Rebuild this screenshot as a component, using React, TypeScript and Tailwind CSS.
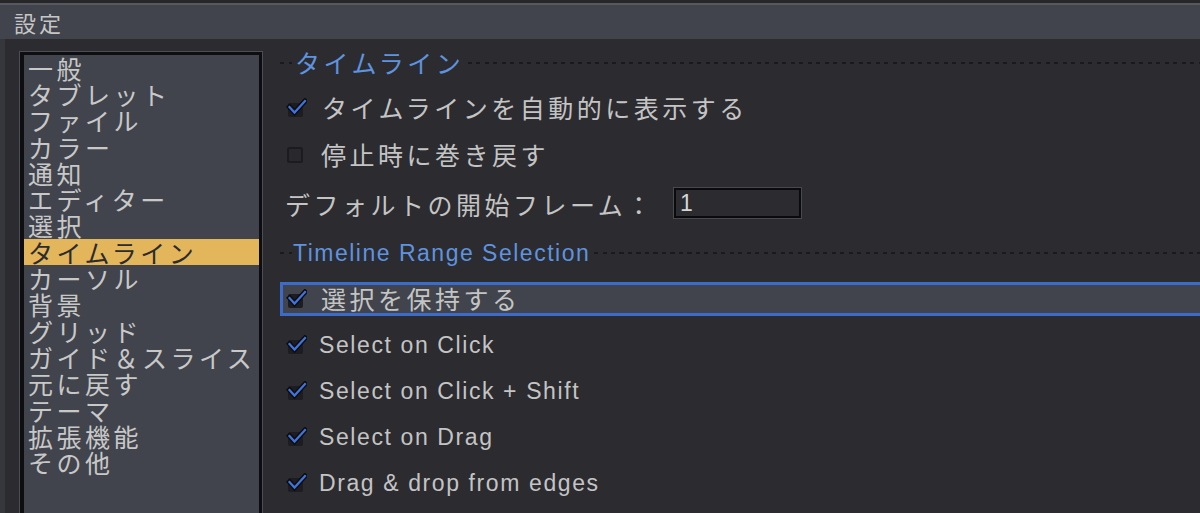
import React from "react";

const jp = "font-['Noto_Sans_CJK_JP','Noto_Sans',sans-serif]";
const px = "font-['Liberation_Sans',Arial,sans-serif]";
const dashes =
  "h-[2px] bg-[repeating-linear-gradient(90deg,#1a1a1e_0px,#1a1a1e_4px,transparent_4px,transparent_8.5px)]";

const sections = [
  "一般",
  "タブレット",
  "ファイル",
  "カラー",
  "通知",
  "エディター",
  "選択",
  "タイムライン",
  "カーソル",
  "背景",
  "グリッド",
  "ガイド＆スライス",
  "元に戻す",
  "テーマ",
  "拡張機能",
  "その他",
];

function CheckBox({ checked }: { checked: boolean }) {
  if (!checked) {
    return (
      <svg width="20" height="20" viewBox="0 0 20 20" className="shrink-0">
        <rect x="2" y="3" width="14" height="14" rx="1.5" fill="#29292d" stroke="#1c1c20" strokeWidth="2" />
      </svg>
    );
  }
  return (
    <svg width="21" height="21" viewBox="0 0 21 21" className="shrink-0">
      <rect x="2" y="5" width="15" height="14" rx="2" fill="#1d1d21" />
      <polyline points="3.5,9 8.5,14.5 19,3" fill="none" stroke="#0c0c0e" strokeWidth="5" strokeLinecap="square" />
      <polyline points="3.5,9 8.5,14.5 19,3" fill="none" stroke="#3f74dc" strokeWidth="2.2" strokeLinecap="square" />
    </svg>
  );
}

function Heading({ children, ascii }: { children: React.ReactNode; ascii?: boolean }) {
  return (
    <div className="flex items-center h-[46px]">
      <div className={`${dashes} w-[12px] shrink-0`} />
      <span
        className={
          ascii
            ? `${px} ml-[1px] text-[23px] tracking-[1.5px] text-[#5f93df] whitespace-nowrap`
            : `${jp} ml-[3px] text-[25px] tracking-[3.5px] text-[#5f93df] whitespace-nowrap`
        }
      >
        {children}
      </span>
      <div className={`${dashes} flex-1 ml-[4px]`} />
    </div>
  );
}

function CheckRow({
  label,
  checked,
  ascii,
  h,
}: {
  label: string;
  checked: boolean;
  ascii?: boolean;
  h: string;
}) {
  return (
    <div className={`flex items-center ${h}`}>
      <div className="ml-[6px]">
        <CheckBox checked={checked} />
      </div>
      <span
        className={
          ascii
            ? `${px} ml-[12px] text-[23px] tracking-[1.6px] text-[#c4c4c4] whitespace-nowrap`
            : `${jp} ml-[15px] text-[25px] tracking-[3.5px] text-[#c4c4c4] whitespace-nowrap`
        }
      >
        {label}
      </span>
    </div>
  );
}

export default function App() {
  return (
    <div className="w-[1200px] h-[513px] overflow-hidden bg-[#2b2b30] flex flex-col">
      <div className="h-[3px] bg-[#27272a] shrink-0" />
      <div className="h-[2px] bg-[#57595f] shrink-0" />
      <div
        className={`${jp} h-[34px] shrink-0 bg-[#41444c] flex items-center pl-[14px] text-[22px] tracking-[3px] text-[#c6c6c6]`}
      >
        設定
      </div>

      <div className="flex flex-1 min-h-0">
        <div className="w-[5px] bg-[#36373c] shrink-0" />
        <div className="w-[14px] shrink-0" />

        {/* section list */}
        <div className="mt-[12px] w-[244px] h-[480px] shrink-0 border-l border-t border-r border-[#4b4e56]">
          <div className="h-full border-l-4 border-t-[3px] border-r-[3px] border-[#0e0e10] bg-[#41444c]">
            {sections.map((s) => {
              const active = s === "タイムライン";
              return (
                <div
                  key={s}
                  className={`${jp} h-[26.3px] flex items-center pl-[4px] text-[25px] leading-none tracking-[3.5px] whitespace-nowrap ${
                    active ? "bg-[#e4b65b] text-[#2b2b30]" : "text-[#c8c8c8]"
                  }`}
                >
                  {s}
                </div>
              );
            })}
          </div>
        </div>

        {/* timeline options */}
        <div className="flex-1 min-w-0 pl-[17px] flex flex-col">
          <div className="mt-[1px]">
            <Heading>タイムライン</Heading>
          </div>
          <CheckRow label="タイムラインを自動的に表示する" checked h="h-[44px]" />
          <CheckRow label="停止時に巻き戻す" checked={false} h="h-[50px]" />

          <div className="flex items-center h-[50px]">
            <span className={`${jp} w-[393px] shrink-0 pl-[5px] text-[25px] tracking-[3.5px] text-[#c4c4c4] whitespace-nowrap`}>
              デフォルトの開始フレーム：
            </span>
            <div className="w-[129px] h-[32px] mb-[4px] shrink-0 border border-[#47494f]">
              <div className="h-full border-2 border-[#0b0b0d] bg-[#2b2b30] flex items-center pl-[4px]">
                <span className={`${px} text-[23px] text-[#d6d6d6]`}>1</span>
              </div>
            </div>
          </div>

          <Heading ascii>Timeline Range Selection</Heading>

          <div className="mt-[6px] h-[34px] flex items-center border-y-[3px] border-l-[3px] border-[#3d6bc9] bg-[#41444c]">
            <div className="ml-[3px]">
              <CheckBox checked />
            </div>
            <span className={`${jp} ml-[14px] text-[25px] tracking-[3.5px] text-[#c4c4c4] whitespace-nowrap`}>
              選択を保持する
            </span>
          </div>

          <div className="mt-[6px]">
            <CheckRow label="Select on Click" checked ascii h="h-[46px]" />
            <CheckRow label="Select on Click + Shift" checked ascii h="h-[46px]" />
            <CheckRow label="Select on Drag" checked ascii h="h-[46px]" />
            <CheckRow label="Drag & drop from edges" checked ascii h="h-[46px]" />
          </div>
        </div>
      </div>
    </div>
  );
}
